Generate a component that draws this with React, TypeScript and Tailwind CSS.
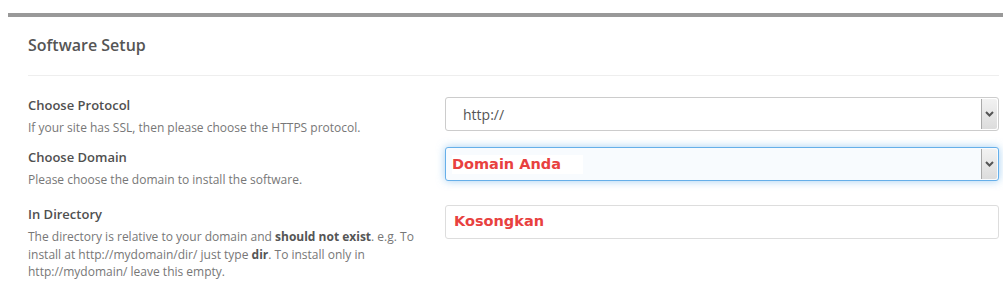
import React from 'react'

function Chevron() {
  return (
    <svg width="9" height="6" viewBox="0 0 9 6" className="block">
      <path d="M1 1 L4.5 4.5 L8 1" fill="none" stroke="#555" strokeWidth="2" />
    </svg>
  )
}

interface SelectBoxProps {
  focused?: boolean
  children: React.ReactNode
}

function SelectBox({ focused, children }: SelectBoxProps) {
  const frame = focused
    ? 'border-[#66afe9] bg-[#f8fbfe] shadow-[0_0_8px_rgba(102,175,233,0.6)]'
    : 'border-[#ccc] bg-white'
  return (
    <div className={`flex h-[34px] w-full items-stretch rounded-[3px] border ${frame}`}>
      <div className="flex flex-1 items-center">{children}</div>
      <div className="my-px mr-px flex w-[16px] items-center justify-center rounded-r-[2px] border-l border-[#aaa] bg-gradient-to-b from-[#f2f2f2] to-[#dcdcdc]">
        <Chevron />
      </div>
    </div>
  )
}

export default function App() {
  const red = 'text-[#e8413f] font-["DejaVu_Sans",sans-serif] text-[14.5px] font-bold'

  return (
    <div className="h-[289px] w-[1003px] overflow-hidden bg-white pl-[8px] pt-[13px] font-['Open_Sans',sans-serif]">
      <div className="border-t-4 border-[#999] pl-[20px] pr-[4px]">
        {/* Header */}
        <div className="border-b border-[#eee] pb-[18px] pt-[16px]">
          <h2 className="text-[16px] font-semibold leading-[24px] text-[#555]">Software Setup</h2>
        </div>

        <div className="pt-[20px]">
          {/* Protocol */}
          <div className="flex h-[51px] items-start">
            <div className="w-[417px] shrink-0 pr-[20px]">
              <p className="text-[13px] font-semibold leading-[18px] text-[#505050]">Choose Protocol</p>
              <p className="mt-[5px] text-[12px] leading-[17px] text-[#777]">
                If your site has SSL, then please choose the HTTPS protocol.
              </p>
            </div>
            <div className="flex-1 pt-px">
              <SelectBox>
                <span className="pl-[17px] text-[14px] text-[#555]">http://</span>
              </SelectBox>
            </div>
          </div>

          {/* Domain */}
          <div className="flex h-[58px] items-start">
            <div className="w-[417px] shrink-0 pr-[20px] pt-px">
              <p className="text-[13px] font-semibold leading-[18px] text-[#505050]">Choose Domain</p>
              <p className="mt-[5px] text-[12px] leading-[17px] text-[#777]">
                Please choose the domain to install the software.
              </p>
            </div>
            <div className="flex-1">
              <SelectBox focused>
                <span className={`ml-[6px] bg-white pr-[22px] leading-[19px] ${red}`}>Domain Anda</span>
              </SelectBox>
            </div>
          </div>

          {/* Directory */}
          <div className="flex items-start">
            <div className="w-[417px] shrink-0 pr-[20px]">
              <p className="text-[13px] font-semibold leading-[18px] text-[#505050]">In Directory</p>
              <p className="mt-[5px] text-[12px] leading-[17.5px] text-[#777]">
                The directory is relative to your domain and <b className="font-bold text-[#555]">should not exist</b>. e.g. To
                install at http://mydomain/dir/ just type <b className="font-bold text-[#555]">dir</b>. To install only in
                http://mydomain/ leave this empty.
              </p>
            </div>
            <div className="flex-1">
              <div className="flex h-[34px] items-center rounded-[3px] border border-[#ddd] bg-white pl-[8px]">
                <span className={red}>Kosongkan</span>
              </div>
            </div>
          </div>
        </div>
      </div>
    </div>
  )
}
